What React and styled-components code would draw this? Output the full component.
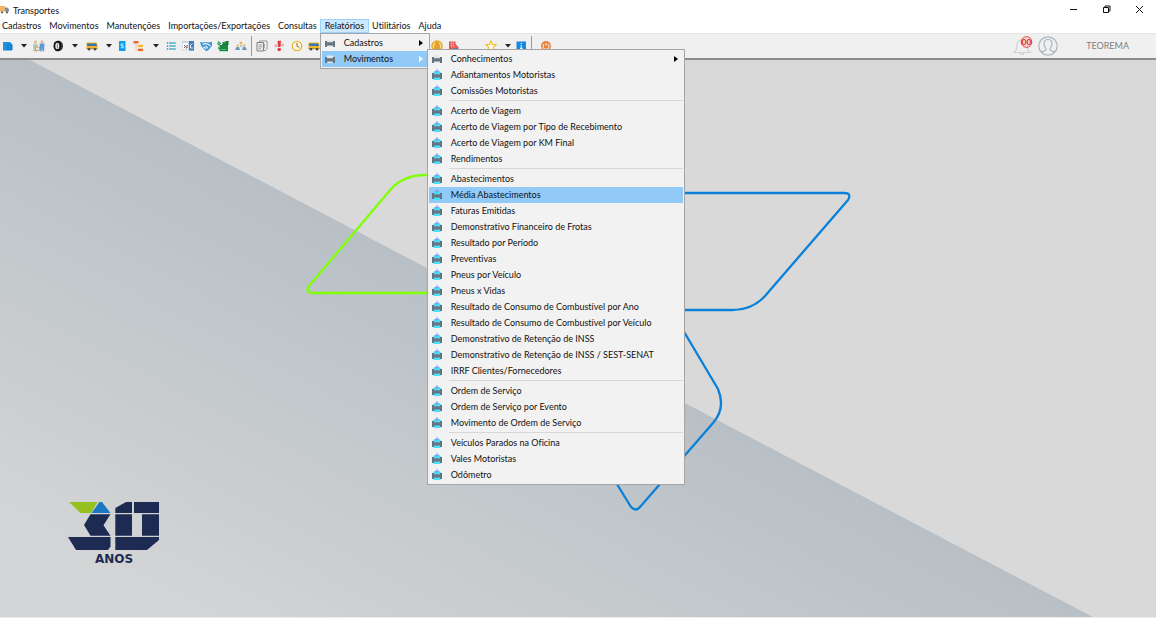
import React from "react";
import styled, { createGlobalStyle } from "styled-components";

const menus = [
    "Cadastros",
    "Movimentos",
    "Manutenções",
    "Importações/Exportações",
    "Consultas",
    "Relatórios",
    "Utilitários",
    "Ajuda",
];

const reportGroups = [
    ["Conhecimentos", "Adiantamentos Motoristas", "Comissões Motoristas"],
    [
        "Acerto de Viagem",
        "Acerto de Viagem por Tipo de Recebimento",
        "Acerto de Viagem por KM Final",
        "Rendimentos",
    ],
    [
        "Abastecimentos",
        "Média Abastecimentos",
        "Faturas Emitidas",
        "Demonstrativo Financeiro de Frotas",
        "Resultado por Período",
        "Preventivas",
        "Pneus por Veículo",
        "Pneus x Vidas",
        "Resultado de Consumo de Combustível por Ano",
        "Resultado de Consumo de Combustível por Veículo",
        "Demonstrativo de Retenção de INSS",
        "Demonstrativo de Retenção de INSS / SEST-SENAT",
        "IRRF Clientes/Fornecedores",
    ],
    [
        "Ordem de Serviço",
        "Ordem de Serviço por Evento",
        "Movimento de Ordem de Serviço",
    ],
    ["Veículos Parados na Oficina", "Vales Motoristas", "Odômetro"],
];

const glyphs = {
    folder: (
        <>
            <path d="M0 2h7l2 2v6.500H0z" fill="#1a8fe3" />
            <path d="M3 4.500h6.500V10H3z" fill="#1478c0" />
            <path d="M0 6.300h9.500M0 8.300h9.500M3.200 4v6M6.300 4v6" stroke="#2ba3f5" strokeWidth=".5" />
        </>
    ),
    clients: (
        <>
            <circle cx="2.500" cy="2" r="1.500" fill="#e4b48a" />
            <circle cx="9" cy="1.800" r="1.500" fill="#e4b48a" />
            <path d="M0 4h4.500l1 4.500L4 11.500H.3z" fill="#b9ccb8" />
            <path d="M6.500 3.500h5l-.5 8h-1.200l-.7-3-.7 3H7.200z" fill="#5b9bd5" />
            <path d="M2.500 7h4v3.500h-4z" fill="#f4e5da" stroke="#d08560" strokeWidth=".8" />
        </>
    ),
    tyre: (
        <>
            <path d="M6 .8c3 0 5 2.200 5 5.200s-2 5.200-5 5.200z" fill="#1b1b1b" />
            <ellipse cx="5.500" cy="6" rx="4" ry="5.200" fill="#111" />
            <ellipse cx="5.300" cy="6" rx="2" ry="3.300" fill="#f2f2f2" />
            <path d="M8.300 2.500l2 1M9 5h2M9 7.200h2M8.300 9.500l2-1" stroke="#888" strokeWidth=".5" />
            <path d="M5.300 3.500v5" stroke="#777" strokeWidth="1" />
        </>
    ),
    bus: (
        <>
            <path d="M.5 2.500h10l1 2v4.500H.5z" fill="#f3b229" />
            <path d="M1.200 3.500h9l.8 2.500H1.200z" fill="#2c70ad" />
            <path d="M4 3.500V6M7.200 3.500V6" stroke="#5ba1d8" strokeWidth=".6" />
            <path d="M.5 8h11v1.200H.5z" fill="#b98b35" />
            <circle cx="3" cy="9.300" r="1.200" fill="#3c4650" />
            <circle cx="9" cy="9.300" r="1.200" fill="#3c4650" />
        </>
    ),
    phone: (
        <>
            <rect x="3" y="1" width="6.500" height="10" rx=".5" fill="#129be8" />
            <rect x="4" y="2.500" width="4.500" height="7" fill="#0aa3f5" />
            <path d="M7.500 4H5.200v1.800h2v1.900H4.900" fill="none" stroke="#d8f0fd" strokeWidth=".9" />
        </>
    ),
    tree: (
        <>
            <path d="M.5 1h5v2.500h-5z" fill="#ea6a3a" />
            <path d="M5 4.800h5v2.400H5z" fill="#f4b92f" />
            <path d="M5 8.700h5v2.400H5z" fill="#f0672a" />
            <path d="M3 3.500v6.500h2M3 6h2" fill="none" stroke="#d8b8ae" strokeWidth=".6" />
        </>
    ),
    list: (
        <>
            <path d="M3.800 3h7M3.800 6h7M3.800 9h7" stroke="#4fb3cb" strokeWidth="1.500" />
            <path d="M1.800 3H3M1.800 6H3M1.800 9H3" stroke="#4a8397" strokeWidth="1.400" />
        </>
    ),
    board: (
        <>
            <path d="M0 1h12v9.500H0z" fill="#c9d4dc" />
            <path d="M7 1h5v9.500H7z" fill="#3e7db5" />
            <path d="M.8 3h5.400v6.500H.8z" fill="#fff" />
            <path d="M2 5l1.500 1.500L2 8M5 5v3H3.700" stroke="#334" strokeWidth=".8" fill="none" />
            <path d="M10.500 3.500L8.500 5v3h2.500" stroke="#e9f3fb" strokeWidth="1" fill="none" />
        </>
    ),
    deal: (
        <>
            <path d="M0 2l3 .5L6 2l3 .5 3-.7v4L8 10.500 6 11 1.500 6.500z" fill="#3d93d6" />
            <path d="M2.500 4.500l3-1L8.500 4.500l2 1.500M3.500 6.800l2.500 2M5.500 5.700l2.500 2.700" stroke="#f0f7fd" strokeWidth="1.200" fill="none" />
        </>
    ),
    pump: (
        <>
            <path d="M2.500 5h8.500v6.200H2.500z" fill="#168a3f" />
            <path d="M5 5L6 2l5.500-1.200V5z" fill="#117735" />
            <path d="M.5 3l2 2.500M1 7.500l2 2M1 1.500l3 2.500" stroke="#2ba357" strokeWidth="1.300" />
            <path d="M6.500 3.500l2.500-1M4 9.500h5" stroke="#8fd0a5" strokeWidth=".6" />
        </>
    ),
    team: (
        <>
            <circle cx="6" cy="3" r="1.500" fill="#e9b95c" />
            <circle cx="2.800" cy="5.500" r="1.300" fill="#e3c083" />
            <circle cx="9.200" cy="5.500" r="1.300" fill="#e3c083" />
            <path d="M0 10l1.500-3H4l1 3zM7 10l1-3h2.500l1.500 3z" fill="#6c96bd" />
            <path d="M4.500 7l.7-2h1.600l.7 2z" fill="#b4c6d5" />
        </>
    ),
    notes: (
        <>
            <path d="M3.500 1H11v8l-1.500 1.500h-6z" fill="#f7f7f7" stroke="#888" strokeWidth=".9" />
            <path d="M1 2.500h6.500V11H1z" fill="#e9e9e9" stroke="#777" strokeWidth=".9" />
            <path d="M2.500 5H6M2.500 6.800H6M2.500 8.600H5M8.500 3.500v5" stroke="#999" strokeWidth=".8" />
        </>
    ),
    alert: (
        <>
            <path d="M4.500.8h3.500L7.500 7H5z" fill="#e43a42" />
            <circle cx="6.200" cy="9.500" r="1.800" fill="#e43a42" />
            <path d="M1.500 4.500h2.800v2.500H1.500zM8.300 3.800h2.500v2.500H8.300z" fill="#efa7a9" />
        </>
    ),
    clock: (
        <>
            <circle cx="6" cy="6" r="4.700" fill="#fff8e0" stroke="#ecb42c" strokeWidth="1.300" />
            <path d="M6 3v3.200l2.200 1.300" fill="none" stroke="#6b5a2a" strokeWidth=".9" />
        </>
    ),
    coin: (
        <>
            <circle cx="6" cy="6" r="5" fill="#fbe3a8" stroke="#e6a72a" strokeWidth="1.500" />
            <path d="M4 5V4a2 2 0 014 0v1M3.500 5.500h5V9h-5z" fill="#e0a02a" stroke="#e0a02a" strokeWidth=".8" />
        </>
    ),
    report: (
        <>
            <path d="M1 1.500h6.500V10H1z" fill="#e8524f" />
            <path d="M2 3.500h4.500M2 5.500h4.500M3.500 2v6M5.500 2v6" stroke="#f6b9b7" strokeWidth=".5" />
            <path d="M7 3.500L10.500 7v3H7z" fill="#d9605c" />
            <path d="M5 8h5v2.500H5z" fill="#4b80b8" />
        </>
    ),
    star: (
        <path
            d="M6 1l1.500 3.400 3.600.4-2.700 2.500.8 3.600L6 9.100 2.800 10.900l.8-3.600L.9 4.800l3.600-.4z"
            fill="#fffbe6"
            stroke="#f5bd2e"
            strokeWidth="1.100"
        />
    ),
    info: (
        <>
            <path d="M1.500 1.500H11V11H1.500z" fill="#158ae0" />
            <path d="M6.200 3v1.300M6.200 5.300v3.200M5 8.500h2.500" stroke="#fff" strokeWidth="1.100" />
        </>
    ),
    power: (
        <>
            <circle cx="6" cy="6" r="5" fill="#e9803a" />
            <path d="M4 4a3 3 0 104 0M6 2.800V6" fill="none" stroke="#fde3cd" strokeWidth="1.100" />
        </>
    ),
};

// [glyph, slot width, label]; caret, line and space have no glyph of their own
const tools = [
    ["folder", 17, "Documentos"],
    ["caret", 13],
    ["clients", 17, "Clientes"],
    ["tyre", 21, "Pneus"],
    ["caret", 13],
    ["bus", 21, "Veículos"],
    ["caret", 13],
    ["phone", 13, "Celular"],
    ["tree", 21, "Plano de contas"],
    ["caret", 13],
    ["list", 17, "Lista"],
    ["board", 18, "Conhecimentos"],
    ["deal", 17, "Acertos"],
    ["pump", 18, "Abastecimentos"],
    ["team", 17, "Motoristas"],
    ["line", 4],
    ["notes", 17, "Notas"],
    ["alert", 18, "Avisos"],
    ["clock", 17, "Agenda"],
    ["bus", 18, "Frota"],
    ["space", 105],
    ["coin", 17, "Financeiro"],
    ["report", 18, "Relatório"],
    ["space", 18],
    ["star", 20, "Favoritos"],
    ["caret", 13],
    ["info", 13, "Informações"],
    ["line", 8],
    ["power", 21, "Sair"],
];

function Tool({ name, width, label }) {
    if (name === "space") return <Slot $width={width} />;
    if (name === "line") {
        return (
            <Slot $width={width}>
                <Line />
            </Slot>
        );
    }
    if (name === "caret") {
        return (
            <ToolButton $width={width} aria-label="Mais opções">
                <svg width="6" height="4" viewBox="0 0 6 4">
                    <path d="M0 0h6L3 3.500z" fill="#222" />
                </svg>
            </ToolButton>
        );
    }
    return (
        <ToolButton $width={width} aria-label={label}>
            <svg width="12" height="12" viewBox="0 0 12 12">
                {glyphs[name]}
            </svg>
        </ToolButton>
    );
}

function Printer({ round }) {
    return (
        <svg width="12" height="12" viewBox="0 0 12 12">
            {round ? (
                <>
                    <path d="M1.500 5C2 2.500 4 1.500 6 1.500s4 1 4.500 3.500v4L9 11H3L1.500 9z" fill="#45e0fa" />
                    <path d="M6 0v4M4.800 2.500h2.400" stroke="#a678e8" strokeWidth=".8" />
                </>
            ) : (
                <path d="M3 2.500h6v3H3zM3.500 8h5v2h-5z" fill="#e3e9ec" />
            )}
            <path d="M1 4h2v1.200h6V4h2v6H9V8.500H3V10H1z" fill="#64737f" />
            <path d="M3 5.200h6v1H3z" fill="#7d8b96" />
        </svg>
    );
}

function Entry({ label, round, active, arrow }) {
    return (
        <li>
            <EntryButton $active={active}>
                <Printer round={round} />
                <EntryLabel>{label}</EntryLabel>
                {arrow && (
                    <svg width="4" height="6" viewBox="0 0 4 6">
                        <path d="M0 0l4 3-4 3z" fill={active ? "#fff" : "#000"} />
                    </svg>
                )}
            </EntryButton>
        </li>
    );
}

function Scene() {
    return (
        <Backdrop viewBox="0 0 1156 557" preserveAspectRatio="xMidYMid slice" aria-hidden="true">
            <defs>
                <linearGradient id="slope" gradientUnits="userSpaceOnUse" x1="420" y1="205" x2="230" y2="568">
                    <stop offset="0" stopColor="#b8c0c6" />
                    <stop offset=".5" stopColor="#c5cacd" />
                    <stop offset="1" stopColor="#d3d4d5" />
                </linearGradient>
            </defs>
            <path d="M-600 -330L30 0L1093 557V900H-600z" fill="url(#slope)" />
            <g fill="none" strokeWidth="2.300" strokeLinejoin="round">
                <path d="M440 115H425Q404 115 391 129L309 226Q305 232 312 233H440" stroke="#80ff05" />
                <path d="M670 133H844Q852 133 848 140L765 236Q752 250 732 250H670" stroke="#0a80d8" />
                <path d="M680 265L718 329Q726 348 713 363L640 447Q636 452 631 447L612 416" stroke="#0a80d8" />
            </g>
        </Backdrop>
    );
}

function Logo() {
    return (
        <Brand>
            <svg width="92" height="48" viewBox="0 0 92 48" fill="#1d2b52" aria-hidden="true">
                <path d="M1 0h28.500L23 11H12.500z" fill="#94c11f" />
                <path d="M31.500 0h2.500l8.500 11h-19z" fill="#1a78c2" />
                <path d="M22.500 12.200h20L35.500 23.300l7 10.500h-20L16 23z" />
                <path d="M0 35h42.500v9.500L40 48H8z" />
                <path d="M47.300 11V6L58 0h6v11zM66 0h25v11H66z" />
                <path d="M47.300 12.300H64v21.500H47.300zM74 12.300h17v21.500H74z" />
                <path d="M47.300 35H91v3L79 48H47.300z" />
            </svg>
            <span>ANOS</span>
        </Brand>
    );
}

function App() {
    return (
        <Window>
            <GlobalStyle />
            <TitleBar>
                <svg width="9" height="9" viewBox="0 0 9 9">
                    <path d="M0 1h5v5.500H0z" fill="#f2b26a" />
                    <path d="M5 2.500h2.500L9 4.500v2H5z" fill="#6f93b0" />
                    <circle cx="2" cy="7.300" r="1.100" fill="#555" />
                    <circle cx="7" cy="7.300" r="1.100" fill="#555" />
                </svg>
                <Title>Transportes</Title>
                <WindowButton aria-label="Minimizar">
                    <svg width="9" height="9" viewBox="0 0 9 9">
                        <path d="M1 4.500h7" stroke="#111" />
                    </svg>
                </WindowButton>
                <WindowButton aria-label="Restaurar">
                    <svg width="9" height="9" viewBox="0 0 9 9" fill="none" stroke="#111">
                        <path d="M1.500 2.500h5v5h-5zM3 2.500V1h5v5H6.500" />
                    </svg>
                </WindowButton>
                <WindowButton aria-label="Fechar">
                    <svg width="9" height="9" viewBox="0 0 9 9">
                        <path d="M1 1l7 7M8 1L1 8" stroke="#111" />
                    </svg>
                </WindowButton>
            </TitleBar>

            <MenuBar>
                {menus.map((name) => (
                    <MenuItem key={name}>
                        <MenuButton $open={name === "Relatórios"}>{name}</MenuButton>
                        {name === "Relatórios" && (
                            <Dropdown>
                                <Entry label="Cadastros" arrow />
                                <Entry label="Movimentos" arrow active />
                                <Submenu>
                                    {reportGroups.map((group, i) => (
                                        <Group key={i}>
                                            {group.map((label) => (
                                                <Entry
                                                    key={label}
                                                    label={label}
                                                    round={label !== "Conhecimentos"}
                                                    arrow={label === "Conhecimentos"}
                                                    active={label === "Média Abastecimentos"}
                                                />
                                            ))}
                                        </Group>
                                    ))}
                                </Submenu>
                            </Dropdown>
                        )}
                    </MenuItem>
                ))}
            </MenuBar>

            <ToolBar>
                {tools.map(([name, width, label], i) => (
                    <Tool key={i} name={name} width={width} label={label} />
                ))}
                <Account>
                    <IconButton aria-label="Notificações">
                        <svg width="20" height="22" viewBox="0 0 20 22" fill="none">
                            <path
                                d="M1 17.500c2.500-1.500 3-3.500 3-7.500 0-3 2-5 5-5s5 2 5 5c0 4 .5 6 3 7.500zM7 18c.5 2 3.500 2 4 0M9 5V3.500"
                                stroke="#cdd2d4"
                                strokeWidth="1.200"
                            />
                            <circle cx="13.500" cy="7" r="5.300" fill="#f6dede" stroke="#ee3b3b" strokeWidth="1" />
                            <text x="13.500" y="10" textAnchor="middle" fontSize="8" fontWeight="700" fill="#e32222">
                                00
                            </text>
                        </svg>
                    </IconButton>
                    <IconButton aria-label="Usuário">
                        <svg width="20" height="20" viewBox="0 0 20 20" fill="none" stroke="#a9b6bb" strokeWidth="1.200">
                            <circle cx="10" cy="10" r="9.200" />
                            <path d="M3.500 16.500c1-1.500 4.500-1.500 4.700-3.200 0-1-2.200-2.300-2.200-5.300C6 5 7.500 3.500 10 3.500S14 5 14 8c0 3-2.200 4.300-2.200 5.300.2 1.700 3.700 1.700 4.700 3.200" />
                        </svg>
                    </IconButton>
                    <UserName>TEOREMA</UserName>
                </Account>
            </ToolBar>

            <Workspace>
                <Scene />
                <Logo />
            </Workspace>
        </Window>
    );
}

const GlobalStyle = createGlobalStyle`
    * {
        box-sizing: border-box;
    }
    body {
        margin: 0;
        color: #111;
        font-family: Lato, "Open Sans", sans-serif;
        font-size: 9px;
        font-variant-ligatures: none;
        line-height: 14px;
    }
    button {
        margin: 0;
        padding: 0;
        border: 0;
        background: none;
        color: inherit;
        font: inherit;
        font-variant-ligatures: none;
    }
    ul {
        margin: 0;
        padding: 0;
        list-style: none;
    }
    svg {
        display: block;
        flex: none;
    }
`;

const Window = styled.div`
    display: flex;
    flex-direction: column;
    min-height: 100vh;
    background-color: white;
`;

const TitleBar = styled.header`
    display: flex;
    align-items: center;
    height: 19px;
`;

const Title = styled.h1`
    flex: 1;
    margin: 2px 0 0 4px;
    font-size: 9px;
    font-weight: 400;
`;

const WindowButton = styled.button`
    display: flex;
    align-items: center;
    justify-content: center;
    width: 33px;
    height: 19px;
`;

const MenuBar = styled.ul`
    display: flex;
    margin-left: -3px;
`;

const MenuItem = styled.li`
    position: relative;

    & + & {
        margin-left: -2px;
    }
`;

const MenuButton = styled.button`
    display: block;
    height: 14px;
    padding: 0 5px;
    background-color: ${(props) => (props.$open ? "#cce8ff" : "transparent")};
    box-shadow: ${(props) => (props.$open ? "inset 0 0 0 1px #99d1ff" : "none")};
`;

const Panel = styled.ul`
    position: absolute;
    padding: 1px;
    border: 1px solid #a5a5a5;
    background-color: #f2f2f2;
`;

const Dropdown = styled(Panel)`
    top: 100%;
    left: 0;
    z-index: 2;
    width: 110px;
`;

const Submenu = styled(Panel).attrs({ as: "div" })`
    top: 15px;
    left: 106px;
    width: 258px;
`;

const Group = styled.ul`
    & + & {
        padding-top: 4px;
        background: linear-gradient(#d7d7d7, #d7d7d7) 20px 1px / 100% 1px no-repeat;
    }
`;

const EntryButton = styled.button`
    display: flex;
    align-items: center;
    width: 100%;
    height: 16px;
    padding: 0 5px 0 2px;
    text-align: left;
    background-color: ${(props) => (props.$active ? "#91c9f7" : "transparent")};
`;

const EntryLabel = styled.span`
    flex: 1;
    padding-left: 8px;
    white-space: nowrap;
`;

const ToolBar = styled.div`
    display: flex;
    align-items: center;
    height: 27px;
    border-top: 1px solid #e6e6e6;
    border-bottom: 2px solid #8c8c8c;
    background-color: #f0f0f0;
`;

const Slot = styled.div`
    display: flex;
    justify-content: center;
    width: ${(props) => props.$width}px;
`;

const Line = styled.div`
    width: 1px;
    height: 20px;
    background-color: #999;
`;

const ToolButton = styled.button`
    display: flex;
    align-items: center;
    justify-content: center;
    width: ${(props) => props.$width}px;
    height: 20px;
`;

const Account = styled.div`
    display: flex;
    align-items: center;
    gap: 5px;
    margin-left: auto;
    padding-right: 27px;
`;

const IconButton = styled.button`
    display: flex;
`;

const UserName = styled.span`
    padding-left: 23px;
    color: #7d7d7d;
`;

const Workspace = styled.main`
    position: relative;
    display: flex;
    flex: 1;
    flex-direction: column;
    align-items: flex-start;
    justify-content: flex-end;
    min-height: 400px;
    padding: 0 68px 51px;
    border-bottom: 1px solid #ececec;
    background-color: #d9d9d9;
`;

const Backdrop = styled.svg`
    position: absolute;
    top: 0;
    left: 0;
    width: 100%;
    height: 100%;
`;

const Brand = styled.div`
    position: relative;
    display: flex;
    flex-direction: column;
    align-items: center;
    gap: 2px;
    color: #1d2b52;
    font-family: "DejaVu Sans", sans-serif;
    font-size: 12px;
    font-weight: 700;
`;

export default App;
